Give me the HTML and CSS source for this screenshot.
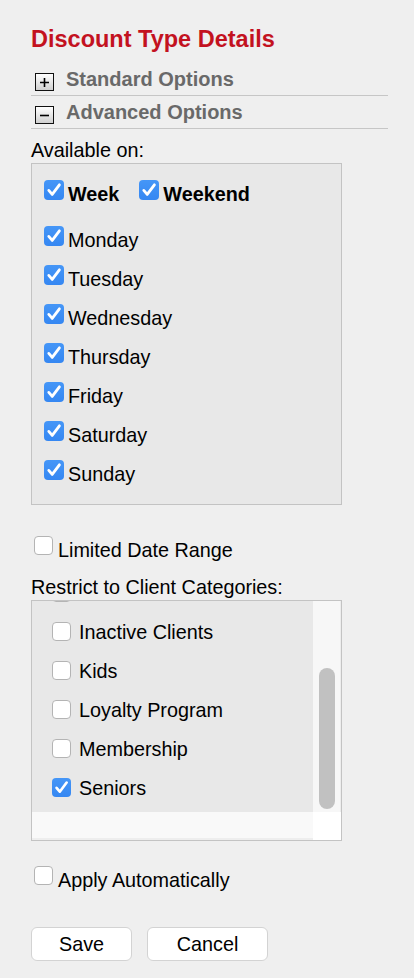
FILE: index.html
```html
<!DOCTYPE html>
<html lang="en">
<head>
    <meta charset="UTF-8">
    <meta name="viewport" content="width=device-width, initial-scale=1.0">
    <title>Discount Type Details</title>
    <link rel="stylesheet" href="styles.css">
</head>
<body>
    <svg class="sprite" xmlns="http://www.w3.org/2000/svg">
        <symbol id="tick" viewBox="0 0 20 20">
            <path d="M4.8 10.4 L8.2 14.4 L15.4 4.8" fill="none" stroke="#ffffff" stroke-width="2.8" stroke-linecap="round" stroke-linejoin="round"/>
        </symbol>
    </svg>

    <div class="form">
        <h1 class="title">Discount Type Details</h1>

        <div class="section-head">
            <span class="toggle">
                <svg width="17" height="16" viewBox="0 0 17 16"><path d="M4 8.5 H13 M8.5 4 V13" stroke="#000" stroke-width="1.6"/></svg>
            </span>
            <span>Standard Options</span>
        </div>
        <div class="section-head">
            <span class="toggle">
                <svg width="17" height="16" viewBox="0 0 17 16"><path d="M4 8.5 H13" stroke="#000" stroke-width="1.6"/></svg>
            </span>
            <span>Advanced Options</span>
        </div>

        <div class="label">Available on:</div>
        <div class="days">
            <div class="week-row">
                <label class="check bold"><span class="box checked"><svg class="tick"><use href="#tick"/></svg></span><span class="text">Week</span></label>
                <label class="check bold"><span class="box checked"><svg class="tick"><use href="#tick"/></svg></span><span class="text">Weekend</span></label>
            </div>
            <label class="check"><span class="box checked"><svg class="tick"><use href="#tick"/></svg></span><span class="text">Monday</span></label>
            <label class="check"><span class="box checked"><svg class="tick"><use href="#tick"/></svg></span><span class="text">Tuesday</span></label>
            <label class="check"><span class="box checked"><svg class="tick"><use href="#tick"/></svg></span><span class="text">Wednesday</span></label>
            <label class="check"><span class="box checked"><svg class="tick"><use href="#tick"/></svg></span><span class="text">Thursday</span></label>
            <label class="check"><span class="box checked"><svg class="tick"><use href="#tick"/></svg></span><span class="text">Friday</span></label>
            <label class="check"><span class="box checked"><svg class="tick"><use href="#tick"/></svg></span><span class="text">Saturday</span></label>
            <label class="check"><span class="box checked"><svg class="tick"><use href="#tick"/></svg></span><span class="text">Sunday</span></label>
        </div>

        <label class="option date-range"><span class="box empty"></span><span class="text">Limited Date Range</span></label>

        <div class="label categories-label">Restrict to Client Categories:</div>
        <div class="listbox">
            <div class="list-view">
                <div class="list-items">
                    <div class="cat"><span class="box empty"></span></div>
                    <label class="cat"><span class="box empty"></span><span>Inactive Clients</span></label>
                    <label class="cat"><span class="box empty"></span><span>Kids</span></label>
                    <label class="cat"><span class="box empty"></span><span>Loyalty Program</span></label>
                    <label class="cat"><span class="box empty"></span><span>Membership</span></label>
                    <label class="cat"><span class="box checked small"><svg class="tick"><use href="#tick"/></svg></span><span>Seniors</span></label>
                </div>
            </div>
            <div class="vscroll"><div class="thumb"></div></div>
            <div class="hscroll"></div>
            <div class="corner"></div>
        </div>

        <label class="option apply"><span class="box empty"></span><span class="text">Apply Automatically</span></label>

        <div class="actions">
            <button class="btn save">Save</button>
            <button class="btn cancel">Cancel</button>
        </div>
    </div>
</body>
</html>
```

FILE: styles.css
```css
body {
    margin: 0;
    background-color: #efefef;
    color: #000000;
    font-family: "Liberation Sans", Arial, sans-serif;
    font-size: 19.8px;
    line-height: 22px;
}

.sprite {
    display: none;
}

.form {
    width: 357px;
    padding: 26px 0 0 31px;
}

.title {
    margin: 0 0 11px;
    font-size: 23.5px;
    line-height: 26px;
    font-weight: bold;
    color: #c3121f;
}

.section-head {
    display: flex;
    align-items: flex-start;
    height: 22px;
    padding: 5px 0;
    border-bottom: 1px solid #c6c6c6;
    font-size: 20px;
    font-weight: bold;
    color: #696969;
}

.toggle {
    display: flex;
    flex: none;
    width: 17px;
    height: 16px;
    margin: 5px 12px 0 4px;
    border: 1px solid #111111;
    background: linear-gradient(#ffffff, #d0d0d0);
}

.label {
    margin: 10px 0 2px;
}

.days {
    width: 311px;
    box-sizing: border-box;
    border: 1px solid #c3c3c3;
    background-color: #e8e8e8;
    padding: 16px 0 19px 12px;
}

.week-row {
    display: flex;
    gap: 20px;
    margin-bottom: 21px;
}

.check {
    display: flex;
    align-items: flex-start;
    margin-bottom: 14px;
}

.week-row .check,
.days .check:last-child {
    margin-bottom: 0;
}

.check .box {
    margin-right: 4px;
}

.check .text,
.option .text {
    padding-top: 3px;
}

.bold {
    font-weight: bold;
}

.box {
    display: flex;
    flex: none;
    width: 20px;
    height: 20px;
    box-sizing: border-box;
    border-radius: 4px;
}

.box.checked {
    background: linear-gradient(#4596f7, #3587f2);
}

.box.small,
.box.empty {
    width: 19px;
    height: 19px;
}

.box.empty {
    background-color: #ffffff;
    border: 1px solid #b4b4b4;
}

.tick {
    width: 100%;
    height: 100%;
}

.option {
    display: flex;
    align-items: flex-start;
}

.option .box {
    margin: 0 5px 0 3px;
}

.date-range {
    margin-top: 31px;
}

.categories-label {
    margin-top: 15px;
}

.listbox {
    display: grid;
    grid-template-columns: 1fr 28px;
    grid-template-rows: 211px 28px;
    width: 311px;
    box-sizing: border-box;
    border: 1px solid #c3c3c3;
}

.list-view {
    overflow: hidden;
    background-color: #e8e8e8;
}

.list-items {
    margin-top: -28px;
    padding-left: 20px;
}

.cat {
    display: flex;
    align-items: center;
    height: 39px;
}

.cat .box {
    margin-right: 8px;
}

.vscroll {
    padding-top: 67px;
    background-color: #f7f7f7;
    border-right: 1px solid #ededed;
}

.thumb {
    width: 16px;
    height: 141px;
    margin-left: 6px;
    border-radius: 8px;
    background-color: #c1c1c1;
}

.hscroll {
    background-color: #f9f9f9;
    border-bottom: 2px solid #eeeeee;
}

.corner {
    background-color: #ffffff;
}

.apply {
    margin-top: 25px;
}

.actions {
    display: flex;
    gap: 15px;
    margin-top: 36px;
}

.btn {
    height: 34px;
    padding: 0;
    border: 1px solid #d3d3d3;
    border-radius: 6px;
    background-color: #ffffff;
    color: #000000;
    font: inherit;
    cursor: pointer;
}

.save {
    width: 101px;
}

.cancel {
    width: 121px;
}
```
